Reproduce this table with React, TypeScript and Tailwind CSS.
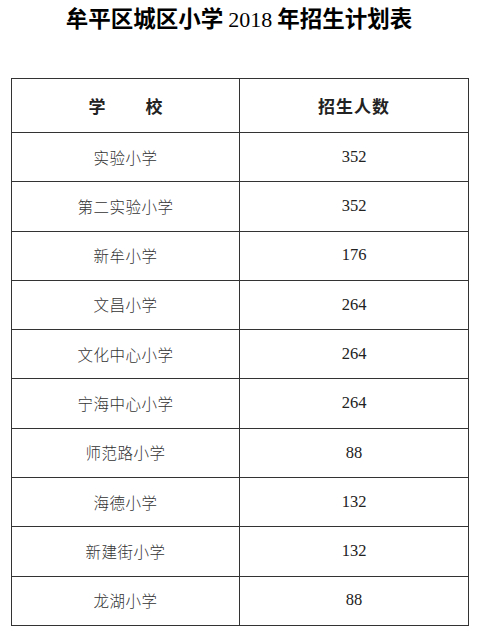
const rows: { name: string; count: number }[] = [
  { name: '实验小学', count: 352 },
  { name: '第二实验小学', count: 352 },
  { name: '新牟小学', count: 176 },
  { name: '文昌小学', count: 264 },
  { name: '文化中心小学', count: 264 },
  { name: '宁海中心小学', count: 264 },
  { name: '师范路小学', count: 88 },
  { name: '海德小学', count: 132 },
  { name: '新建街小学', count: 132 },
  { name: '龙湖小学', count: 88 },
];

const cjk = "font-['Noto_Sans_CJK_SC',sans-serif]";
const serif = "font-['Liberation_Serif','Noto_Sans_CJK_SC',serif]";

export default function App() {
  return (
    <div className="w-[478px] h-[636px] bg-white overflow-hidden">
      {/* 标题 */}
      <div className="h-[37px] flex items-center justify-center">
        <h1 className={`${cjk} text-[22.5px] font-bold text-black`}>
          牟平区城区小学
          <span className={`${serif} font-normal text-[22px] mx-[5px]`}>2018</span>
          年招生计划表
        </h1>
      </div>

      <div className="mt-[41px] px-[11px]">
        <table className="w-[458px] border-collapse border border-[#333] table-fixed">
          <thead>
            <tr className="h-[54px]">
              <th className={`${cjk} w-[228px] border border-[#333] text-[17px] font-bold text-[#222]`}>
                学<span className="inline-block w-[40px]" />校
              </th>
              <th className={`${cjk} border border-[#333] text-[17px] font-bold text-[#222] tracking-[1px]`}>
                招生人数
              </th>
            </tr>
          </thead>
          <tbody>
            {rows.map((row) => (
              <tr key={row.name} className="h-[49.3px]">
                <td className={`${cjk} border border-[#333] text-center text-[15.5px] font-light text-[#333] tracking-[0.5px]`}>
                  {row.name}
                </td>
                <td className={`${serif} border border-[#333] text-center text-[16.5px] text-[#222]`}>
                  {row.count}
                </td>
              </tr>
            ))}
          </tbody>
        </table>
      </div>
    </div>
  );
}
